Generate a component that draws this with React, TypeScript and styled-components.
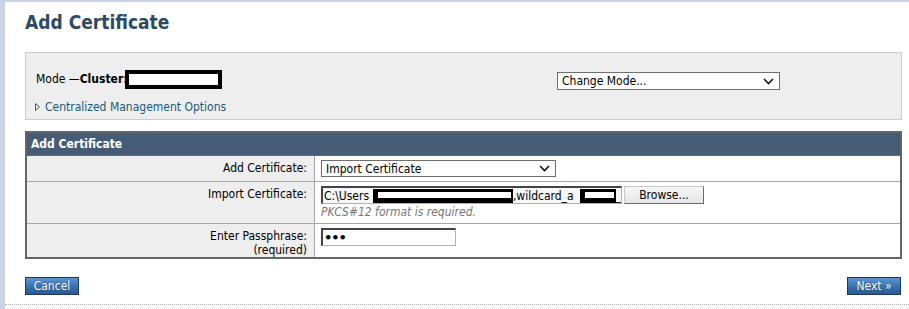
import React from "react";
import styled, { createGlobalStyle } from "styled-components";

const GlobalStyle = createGlobalStyle`
  html, body { margin: 0; padding: 0; }
  body {
    background: #cad4e4;
    font-family: "DejaVu Sans Condensed", "DejaVu Sans", sans-serif;
    font-size: 12px;
    color: #000;
  }
`;

const Page = styled.div`
  margin: 2px 0 0 5px;
  background: #fff;
  height: 302px;
  box-sizing: border-box;
  padding: 8px 7px 0 20px;
`;

const Footer = styled.div`
  margin-left: 5px;
  height: 5px;
  border-top: 1px dotted #b8b8b8;
  background: #f7f7f7;
`;

const Title = styled.h1`
  margin: 0;
  font-size: 19px;
  line-height: 24px;
  font-weight: bold;
  color: #2e4a63;
`;

const ModeBox = styled.div`
  margin-top: 18px;
  background: #eeeeee;
  border: 1px solid #cccccc;
  padding: 17px 0 5px 10px;
`;

const ModeRow = styled.div`
  display: flex;
  align-items: flex-start;
`;

const ModeText = styled.div`
  flex: 1;
  display: flex;
  align-items: center;
  height: 19px;
  line-height: 19px;
`;

const Bold = styled.b`
  font-weight: bold;
`;

const Redact = styled.span<{ $w: number; $h: number }>`
  display: inline-block;
  box-sizing: border-box;
  width: ${(p) => p.$w}px;
  height: ${(p) => p.$h}px;
  margin-left: -3px;
  background: #fff;
  border: 4px solid #000;
`;

const FakeSelect = styled.div<{ $w: number; $h: number }>`
  box-sizing: border-box;
  width: ${(p) => p.$w}px;
  height: ${(p) => p.$h}px;
  border: 1px solid #6e6e6e;
  background: #fff;
  display: flex;
  align-items: center;
  justify-content: space-between;
  padding: 0 5px 0 4px;
  line-height: 1;
`;

const ModeSelectWrap = styled.div`
  margin: 2px 121px 0 0;
`;

const LinkRow = styled.div`
  margin: 10px 0 0 -1px;
  height: 14px;
  display: flex;
  align-items: center;
  gap: 5px;
  color: #1b5a78;
`;

const Panel = styled.div`
  margin-top: 11px;
  border: 2px solid #666666;
`;

const PanelHeader = styled.div`
  background: #455c77;
  color: #fff;
  font-weight: bold;
  height: 22px;
  line-height: 22px;
  padding-left: 4px;
  border-bottom: 1px solid #5f6b78;
`;

const Row = styled.div<{ $last?: boolean }>`
  display: grid;
  grid-template-columns: 288px 1fr;
  border-bottom: ${(p) => (p.$last ? "none" : "1px solid #a6a6a6")};
`;

const Label = styled.div`
  background: #eeeeee;
  border-right: 1px solid #a6a6a6;
  text-align: right;
  padding: 5px 7px 0 0;
  line-height: 14px;
`;

const Value = styled.div<{ $pb: number }>`
  padding: 4px 6px ${(p) => p.$pb}px 6px;
`;

const FileRow = styled.div`
  display: flex;
  align-items: center;
  gap: 2px;
`;

const FileField = styled.div`
  box-sizing: border-box;
  width: 301px;
  height: 18px;
  background: #f7f7f7;
  border: 1px solid #b0b0b0;
  border-top: 2px solid #444;
  border-left: 2px solid #444;
  display: flex;
  align-items: center;
  overflow: hidden;
  white-space: nowrap;
  padding-left: 1px;
`;

const InlineRedact = styled.span<{ $w: number; $ml: number }>`
  display: inline-block;
  box-sizing: border-box;
  width: ${(p) => p.$w}px;
  height: 14px;
  margin-left: ${(p) => p.$ml}px;
  background: #fff;
  border-style: solid;
  border-color: #000;
  border-width: 3px 2px 5px 5px;
`;

const BrowseButton = styled.div`
  box-sizing: border-box;
  width: 80px;
  height: 18px;
  background: linear-gradient(#f6f6f6, #e6e6e6);
  border: 1px solid #c8c8c8;
  border-right-color: #6a6a6a;
  border-bottom-color: #6a6a6a;
  display: flex;
  align-items: center;
  justify-content: center;
`;

const Hint = styled.div`
  font-style: italic;
  color: #777;
  line-height: 14px;
  margin-top: 1px;
`;

const Password = styled.div`
  box-sizing: border-box;
  width: 135px;
  height: 18px;
  background: #fff;
  border: 1px solid #b0b0b0;
  border-top: 2px solid #444;
  border-left: 2px solid #444;
  font-family: "DejaVu Sans", sans-serif;
  font-size: 13px;
  font-weight: bold;
  letter-spacing: -1px;
  display: flex;
  align-items: center;
  padding-left: 1px;
`;

const Actions = styled.div`
  margin: 18px 1px 0 0;
  display: flex;
  justify-content: space-between;
`;

const ActionButton = styled.button`
  box-sizing: border-box;
  width: 54px;
  height: 18px;
  padding: 0;
  font-family: inherit;
  font-size: 12px;
  color: #fff;
  background: linear-gradient(#5a95d6, #3a6fae 55%, #2b5a92);
  border: 1px solid #1c3758;
  text-shadow: 0 0 1px #1c3758;
  line-height: 16px;
`;

const Chevron = () => (
  <svg width="11" height="7" viewBox="0 0 11 7">
    <polyline points="1,1 5.5,5.5 10,1" fill="none" stroke="#111" strokeWidth="1.6" />
  </svg>
);

const Triangle = () => (
  <svg width="5" height="8" viewBox="0 0 5 8">
    <polygon points="0.5,0.5 4.5,4 0.5,7.5" fill="none" stroke="#555" strokeWidth="1" />
  </svg>
);

export default function App() {
  return (
    <>
      <GlobalStyle />
      <Page>
        <Title>Add Certificate</Title>
        <ModeBox>
          <ModeRow>
            <ModeText>
              Mode —<Bold>Cluster:</Bold>
              <Redact $w={97} $h={19} />
            </ModeText>
            <ModeSelectWrap>
              <FakeSelect $w={223} $h={18}>
                <span>Change Mode...</span>
                <Chevron />
              </FakeSelect>
            </ModeSelectWrap>
          </ModeRow>
          <LinkRow>
            <Triangle />
            <span>Centralized Management Options</span>
          </LinkRow>
        </ModeBox>

        <Panel>
          <PanelHeader>Add Certificate</PanelHeader>
          <Row>
            <Label>Add Certificate:</Label>
            <Value $pb={4}>
              <FakeSelect $w={235} $h={17}>
                <span>Import Certificate</span>
                <Chevron />
              </FakeSelect>
            </Value>
          </Row>
          <Row>
            <Label>Import Certificate:</Label>
            <Value $pb={4}>
              <FileRow>
                <FileField>
                  C:\Users
                  <InlineRedact $w={140} $ml={4} />
                  ,wildcard_a
                  <InlineRedact $w={36} $ml={6} />_
                </FileField>
                <BrowseButton>Browse...</BrowseButton>
              </FileRow>
              <Hint>PKCS#12 format is required.</Hint>
            </Value>
          </Row>
          <Row $last>
            <Label>
              Enter Passphrase:
              <br />
              (required)
            </Label>
            <Value $pb={11}>
              <Password>•••</Password>
            </Value>
          </Row>
        </Panel>

        <Actions>
          <ActionButton>Cancel</ActionButton>
          <ActionButton>Next »</ActionButton>
        </Actions>
      </Page>
      <Footer />
    </>
  );
}
